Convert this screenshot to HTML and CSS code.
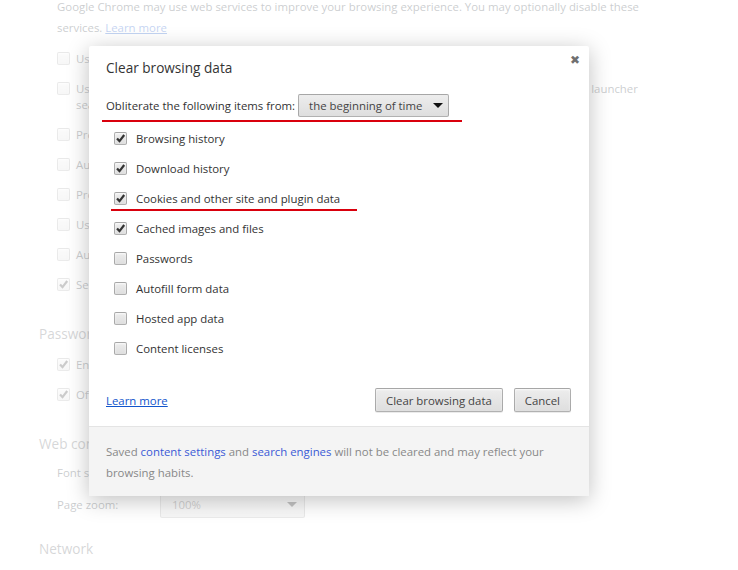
FILE: index.html
```html
<!DOCTYPE html>
<html lang="en">
<head>
  <meta charset="UTF-8">
  <title>Settings - Clear browsing data</title>
  <link rel="stylesheet" href="styles.css">
</head>
<body>
  <div class="page">
    <p class="intro">Google Chrome may use web services to improve your browsing experience. You may optionally disable these<br>services. <a href="#">Learn more</a></p>

    <div class="opt"><span class="box"></span><span>Use a web service to help resolve navigation errors</span></div>
    <div class="opt tall"><span class="box"></span><span>Use a prediction service to help complete searches and URLs typed in the address bar or the app launcher<br>search box</span></div>
    <div class="opt"><span class="box"></span><span>Prefetch resources to load pages more quickly</span></div>
    <div class="opt"><span class="box"></span><span>Automatically send usage statistics and crash reports to Google</span></div>
    <div class="opt"><span class="box"></span><span>Protect you and your device from dangerous sites</span></div>
    <div class="opt"><span class="box"></span><span>Use a web service to help resolve spelling errors</span></div>
    <div class="opt"><span class="box"></span><span>Automatically send some system information and page content to Google</span></div>
    <div class="opt"><span class="box checked"><svg viewBox="0 0 13 13"><path d="M3 6.5l2.5 2.6L10.2 3"/></svg></span><span>Send a "Do Not Track" request with your browsing traffic</span></div>

    <h3 class="section">Passwords and forms</h3>
    <div class="opt"><span class="box checked"><svg viewBox="0 0 13 13"><path d="M3 6.5l2.5 2.6L10.2 3"/></svg></span><span>Enable Autofill to fill out web forms in a single click.</span></div>
    <div class="opt"><span class="box checked"><svg viewBox="0 0 13 13"><path d="M3 6.5l2.5 2.6L10.2 3"/></svg></span><span>Offer to save your web passwords.</span></div>

    <h3 class="section web">Web content</h3>
    <div class="field"><span class="field-label">Font size:</span><span class="select page-select">Medium<i class="arrow"></i></span></div>
    <div class="field zoom"><span class="field-label">Page zoom:</span><span class="select page-select">100%<i class="arrow"></i></span></div>

    <h3 class="section net">Network</h3>
  </div>

  <div class="overlay"></div>

  <div class="dialog">
    <div class="dialog-body">
      <span class="close">&#x2716;</span>
      <h2 class="dialog-title">Clear browsing data</h2>

      <div class="from-row">
        <span>Obliterate the following items from:</span>
        <span class="select">the beginning of time<i class="arrow"></i></span>
      </div>

      <ul class="items">
        <li><span class="box checked"><svg viewBox="0 0 13 13"><path d="M3 6.5l2.5 2.6L10.2 3"/></svg></span>Browsing history</li>
        <li><span class="box checked"><svg viewBox="0 0 13 13"><path d="M3 6.5l2.5 2.6L10.2 3"/></svg></span>Download history</li>
        <li class="marked"><span class="box checked"><svg viewBox="0 0 13 13"><path d="M3 6.5l2.5 2.6L10.2 3"/></svg></span>Cookies and other site and plugin data</li>
        <li><span class="box checked"><svg viewBox="0 0 13 13"><path d="M3 6.5l2.5 2.6L10.2 3"/></svg></span>Cached images and files</li>
        <li><span class="box"></span>Passwords</li>
        <li><span class="box"></span>Autofill form data</li>
        <li><span class="box"></span>Hosted app data</li>
        <li><span class="box"></span>Content licenses</li>
      </ul>

      <div class="actions">
        <a href="#" class="link">Learn more</a>
        <div class="buttons">
          <button>Clear browsing data</button>
          <button>Cancel</button>
        </div>
      </div>
    </div>

    <div class="dialog-footer">
      <p>Saved <a href="#">content settings</a> and <a href="#">search engines</a> will not be cleared and may reflect your browsing habits.</p>
    </div>
  </div>
</body>
</html>
```

FILE: styles.css
```css
body {
  margin: 0;
  height: 570px;
  overflow: hidden;
  background: #fff;
  font-family: 'Open Sans', sans-serif;
  font-size: 11.4px;
  color: #303942;
  position: relative;
}

a {
  color: #15c;
}

/* settings page behind the dialog */

.page {
  padding-left: 39px;
  margin-top: -4px;
}

.intro {
  margin: 0 0 0 18px;
  line-height: 21px;
  white-space: nowrap;
}

.opt {
  display: flex;
  align-items: flex-start;
  margin-left: 18px;
  padding: 7px 0;
  line-height: 16px;
  white-space: nowrap;
}

.opt:first-of-type {
  margin-top: 6px;
}

.opt .box {
  margin: 1px 6px 0 0;
}

.section {
  margin: 24px 0 6px;
  font-size: 13.6px;
  font-weight: normal;
  line-height: 20px;
  color: #5c6166;
}

.section.web {
  margin-bottom: 3px;
}

.section.net {
  margin-top: 18px;
}

.field {
  display: flex;
  align-items: center;
  margin-left: 18px;
  height: 30px;
}

.field.zoom {
  height: 34px;
}

.field-label {
  width: 103px;
}

.page-select {
  width: 145px;
  height: 28px;
  padding-left: 11px;
}

.page-select .arrow {
  margin-right: 7px;
}

.overlay {
  position: absolute;
  inset: 0;
  background: rgba(255, 255, 255, 0.75);
}

/* controls */

.box {
  flex: none;
  display: inline-flex;
  box-sizing: border-box;
  width: 13px;
  height: 13px;
  border: 1px solid rgba(0, 0, 0, 0.25);
  border-radius: 2px;
  background: linear-gradient(#ededed, #dedede);
  box-shadow: inset 0 1px 2px rgba(255, 255, 255, 0.75);
}

.box svg {
  width: 13px;
  height: 13px;
  margin: -1px;
}

.box path {
  fill: none;
  stroke: #333;
  stroke-width: 2.2;
}

.select {
  display: inline-flex;
  align-items: center;
  justify-content: space-between;
  box-sizing: border-box;
  white-space: nowrap;
  border: 1px solid rgba(0, 0, 0, 0.25);
  border-radius: 2px;
  background: linear-gradient(#ededed, #dedede);
  color: #444;
}

.arrow {
  width: 0;
  height: 0;
  border-left: 5px solid transparent;
  border-right: 5px solid transparent;
  border-top: 5px solid #111;
}

/* dialog */

.dialog {
  position: absolute;
  left: 89px;
  top: 46px;
  width: 500px;
  height: 450px;
  box-sizing: border-box;
  background: #fff;
  border-radius: 2px;
  box-shadow: 0 4px 22px rgba(0, 0, 0, 0.25);
  color: #333;
  display: flex;
  flex-direction: column;
}

.dialog-body {
  position: relative;
  padding: 12px 18px 14px 17px;
  flex: 1;
}

.close {
  position: absolute;
  right: 9px;
  top: 5px;
  font-size: 12px;
  color: #707070;
}

.dialog-title {
  margin: 0;
  font-size: 13.6px;
  font-weight: normal;
  line-height: 20px;
}

.from-row {
  display: flex;
  align-items: center;
  gap: 3px;
  width: 356px;
  margin: 16px 0 0 -4px;
  padding: 0 0 3px 4px;
  border-bottom: 2px solid #d9000d;
}

.from-row .select {
  width: 151px;
  height: 23px;
  padding: 0 5px 0 10px;
}

.items {
  list-style: none;
  margin: 1px 0 0 8px;
  padding: 0;
}

.items li {
  position: relative;
  display: flex;
  align-items: center;
  height: 30px;
}

.items .box {
  margin-right: 9px;
}

.items li.marked::after {
  content: "";
  position: absolute;
  left: -3px;
  top: 26px;
  width: 246px;
  height: 2px;
  background: #d9000d;
}

.actions {
  display: flex;
  justify-content: space-between;
  align-items: center;
  margin-top: 25px;
}

.buttons {
  display: flex;
  gap: 11px;
}

button {
  height: 24px;
  padding: 0 10px;
  font-family: inherit;
  font-size: 11.4px;
  color: #444;
  border: 1px solid rgba(0, 0, 0, 0.25);
  border-radius: 2px;
  background: linear-gradient(#ededed, #dedede);
  box-shadow: 0 1px 0 rgba(0, 0, 0, 0.08), inset 0 1px 2px rgba(255, 255, 255, 0.75);
}

.dialog-footer {
  height: 70px;
  box-sizing: border-box;
  padding: 14px 40px 0 17px;
  border-top: 1px solid #e4e4e4;
  background: #f4f4f4;
  color: #888;
}

.dialog-footer p {
  margin: 0;
  line-height: 21px;
}

.dialog-footer a {
  text-decoration: none;
  color: #3a5ad6;
}
```
